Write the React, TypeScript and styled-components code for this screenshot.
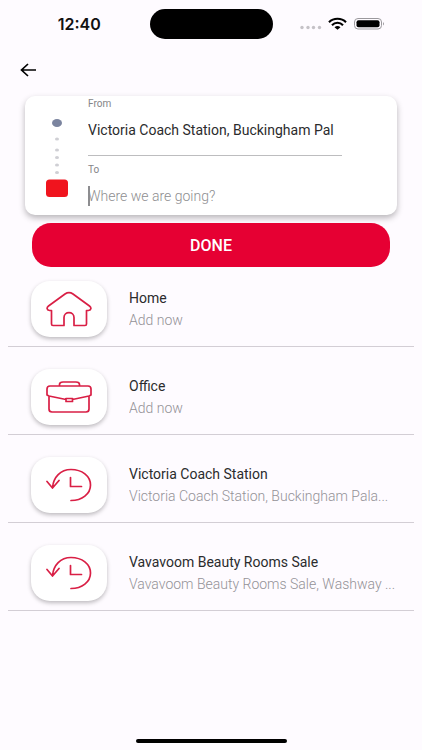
import React from "react";
import styled, { createGlobalStyle } from "styled-components";

const red = "#e60033";
const stroke = "#d91f45";

const GlobalStyle = createGlobalStyle`
  * { box-sizing: border-box; }
  body { margin: 0; background: #fefbff; }
  button, input { font-family: inherit; margin: 0; }
`;

const Page = styled.div`
  display: flex;
  flex-direction: column;
  min-height: 100vh;
  background: #fefbff;
  color: #2b2b2d;
  font-family: Roboto, "Liberation Sans", sans-serif;
`;

const StatusBar = styled.header`
  display: grid;
  grid-template-columns: 1fr 123px 1fr;
  align-items: center;
  height: 48px;
`;

const Clock = styled.time`
  justify-self: center;
  padding-left: 9px;
  font: 600 16px/20px Inter, sans-serif;
  color: #111;
`;

const Island = styled.div`
  height: 30px;
  border-radius: 15px;
  background: #000;
`;

const StatusIcons = styled.svg`
  justify-self: end;
  margin-right: 36px;
  display: block;
`;

const NavBar = styled.nav`
  display: flex;
  align-items: center;
  height: 48px;
  padding: 0 16px 4px;
`;

const BackButton = styled.button`
  display: flex;
  padding: 4px;
  border: 0;
  background: none;
  cursor: pointer;
`;

const RouteCard = styled.section`
  display: flex;
  margin: 0 25px;
  padding-right: 55px;
  border-radius: 10px;
  background: #fff;
  box-shadow: 0 3px 6px rgba(0, 0, 0, 0.28);
`;

const RouteMarker = styled.svg`
  flex: none;
  display: block;
`;

const Fields = styled.div`
  flex: 1;
  min-width: 0;
`;

const Field = styled.div<{ $divided?: boolean }>`
  position: relative;
  padding-bottom: ${(p) => (p.$divided ? 7 : 1)}px;
  margin-bottom: ${(p) => (p.$divided ? 6 : 0)}px;
  border-bottom: ${(p) => (p.$divided ? "1px solid #bdbdbf" : "0")};
`;

const FieldLabel = styled.label`
  display: block;
  font-size: 10px;
  line-height: 16px;
  color: #858587;
`;

const FieldInput = styled.input`
  display: block;
  width: 100%;
  height: 36px;
  padding: 0;
  border: 0;
  outline: 0;
  background: transparent;
  font-size: 14px;
  color: #2b2b2d;
  &::placeholder { color: #8e8e90; font-weight: 300; opacity: 1; }
`;

const Caret = styled.span`
  position: absolute;
  left: 0;
  bottom: 9px;
  width: 2px;
  height: 20px;
  background: #8d8d90;
`;

const Actions = styled.div`
  display: flex;
  flex-direction: column;
  padding: 8px 32px 0;
`;

const DoneButton = styled.button`
  height: 44px;
  border: 0;
  border-radius: 19px;
  background: ${red};
  color: #fff;
  font-size: 16px;
  font-weight: 500;
  cursor: pointer;
`;

const PlaceList = styled.ul`
  display: flex;
  flex-direction: column;
  gap: 22px;
  margin: 0 8px;
  padding: 14px 0 0;
  list-style: none;
`;

const PlaceRow = styled.li`
  display: flex;
  align-items: center;
  gap: 22px;
  padding: 0 8px 9px 23px;
  border-bottom: 1px solid #d3ced5;
`;

const Tile = styled.div`
  flex: none;
  display: grid;
  place-items: center;
  width: 76px;
  height: 56px;
  border-radius: 19px;
  background: #fff;
  box-shadow: 0 2px 4px rgba(0, 0, 0, 0.26);
`;

const PlaceText = styled.div`
  min-width: 0;
  line-height: 22px;
  font-size: 14px;
`;

const PlaceTitle = styled.div`
  color: #2b2b2d;
`;

const PlaceDetail = styled.div`
  overflow: hidden;
  white-space: nowrap;
  text-overflow: ellipsis;
  font-weight: 300;
  color: #949297;
`;

const HomeIndicator = styled.div`
  align-self: center;
  width: 151px;
  height: 4px;
  margin: auto 0 7px;
  border-radius: 2px;
  background: #000;
`;

const Icon = styled.svg`
  display: block;
  fill: none;
  stroke: ${stroke};
  stroke-width: 1.7;
  stroke-linecap: round;
  stroke-linejoin: round;
`;

const HomeIcon = () => (
  <Icon width="46" height="36" viewBox="0 0 46 36" aria-hidden="true">
    <path d="M5.500 19.500V33Q5.500 34.500 7 34.500H18V26.500C18 20 28 20 28 26.500V34.500H39Q40.500 34.500 40.500 33V19.500H42.500C45.500 19 45.500 16.500 43.500 15L27 3C24 1 22 1 19 3L2.500 15C.5 16.500 .5 19 3.500 19.500Z" />
  </Icon>
);

const OfficeIcon = () => (
  <Icon width="46" height="32" viewBox="0 0 46 32" aria-hidden="true">
    <path d="M13.500 5V3.500Q13.500 1 17 1H30Q33.500 1 33.500 3.500V5M4 5H42Q45 5 45 8V14L43 15 26.500 18.500M20 18.500 3 15 1 14V8Q1 5 4 5M3 15V28Q3 31 6 31H40Q43 31 43 28V15M20 17.500H26.500V20.500H20Z" />
  </Icon>
);

const HistoryIcon = () => (
  <Icon width="46" height="34" viewBox="0 0 46 34" aria-hidden="true">
    <path d="M6.500 19.500C7.500 9 14.500 1.500 25 1.500C36 1.500 44.500 8 44.500 17C44.500 26 36 32.500 25 32.500M1 13.500 6.500 20 13 12.500M24.500 9.500V18.500H35.500" />
  </Icon>
);

const places = [
  { title: "Home", detail: "Add now", Glyph: HomeIcon },
  { title: "Office", detail: "Add now", Glyph: OfficeIcon },
  {
    title: "Victoria Coach Station",
    detail: "Victoria Coach Station, Buckingham Pala...",
    Glyph: HistoryIcon,
  },
  {
    title: "Vavavoom Beauty Rooms Sale",
    detail: "Vavavoom Beauty Rooms Sale, Washway ...",
    Glyph: HistoryIcon,
  },
];

export default function App() {
  return (
    <Page>
      <GlobalStyle />
      <StatusBar>
        <Clock>12:40</Clock>
        <Island />
        <StatusIcons width="87" height="14" viewBox="0 0 87 14" aria-hidden="true">
          <g fill="#c5c2c7">
            <circle cx="3" cy="10.500" r="1.700" />
            <circle cx="9" cy="10.500" r="1.700" />
            <circle cx="14.500" cy="10.500" r="1.700" />
            <circle cx="20.500" cy="10.500" r="1.700" />
          </g>
          <g fill="none" stroke="#000" strokeWidth="2.100">
            <path d="M30 5.200C34.500 .6 42.500 .6 47 5.200" />
            <path d="M33 8.200C36 5 41 5 44 8.200" />
          </g>
          <path d="M35.500 10.200Q38.500 7.800 41.500 10.200L38.500 12.700Z" />
          <rect x="55.500" y="1.500" width="27" height="10.500" rx="3.500" fill="none" stroke="#9b999d" />
          <rect x="57.500" y="3.300" width="23" height="7" rx="2" />
          <path d="M84 5v3.500q2-1.700 0-3.500" fill="#9b999d" />
        </StatusIcons>
      </StatusBar>
      <NavBar>
        <BackButton aria-label="Back">
          <svg width="17" height="14" viewBox="0 0 17 14" fill="none" stroke="#000" strokeWidth="1.700">
            <path d="M16 7H1.500M8 1 1.500 7 8 13" />
          </svg>
        </BackButton>
      </NavBar>
      <main>
        <RouteCard>
          <RouteMarker width="63" height="119" viewBox="0 0 63 119" aria-hidden="true">
            <ellipse cx="32" cy="27" rx="5" ry="4" fill="#7b849f" />
            <g fill="#cfcfd4">
              <ellipse cx="32" cy="43" rx="2" ry="1.500" />
              <ellipse cx="32" cy="54" rx="2" ry="1.500" />
              <ellipse cx="32" cy="61.500" rx="2" ry="1.500" />
              <ellipse cx="32" cy="69" rx="2" ry="1.500" />
              <ellipse cx="32" cy="76.500" rx="2" ry="1.500" />
            </g>
            <rect x="21" y="83.500" width="22" height="17.500" rx="3.500" fill="#f0141e" />
          </RouteMarker>
          <Fields>
            <Field $divided>
              <FieldLabel htmlFor="from">From</FieldLabel>
              <FieldInput id="from" defaultValue="Victoria Coach Station, Buckingham Pal" />
            </Field>
            <Field>
              <FieldLabel htmlFor="to">To</FieldLabel>
              <FieldInput id="to" placeholder="Where we are going?" />
              <Caret />
            </Field>
          </Fields>
        </RouteCard>
        <Actions>
          <DoneButton>DONE</DoneButton>
        </Actions>
        <PlaceList>
          {places.map(({ title, detail, Glyph }) => (
            <PlaceRow key={title}>
              <Tile>
                <Glyph />
              </Tile>
              <PlaceText>
                <PlaceTitle>{title}</PlaceTitle>
                <PlaceDetail>{detail}</PlaceDetail>
              </PlaceText>
            </PlaceRow>
          ))}
        </PlaceList>
      </main>
      <HomeIndicator />
    </Page>
  );
}
